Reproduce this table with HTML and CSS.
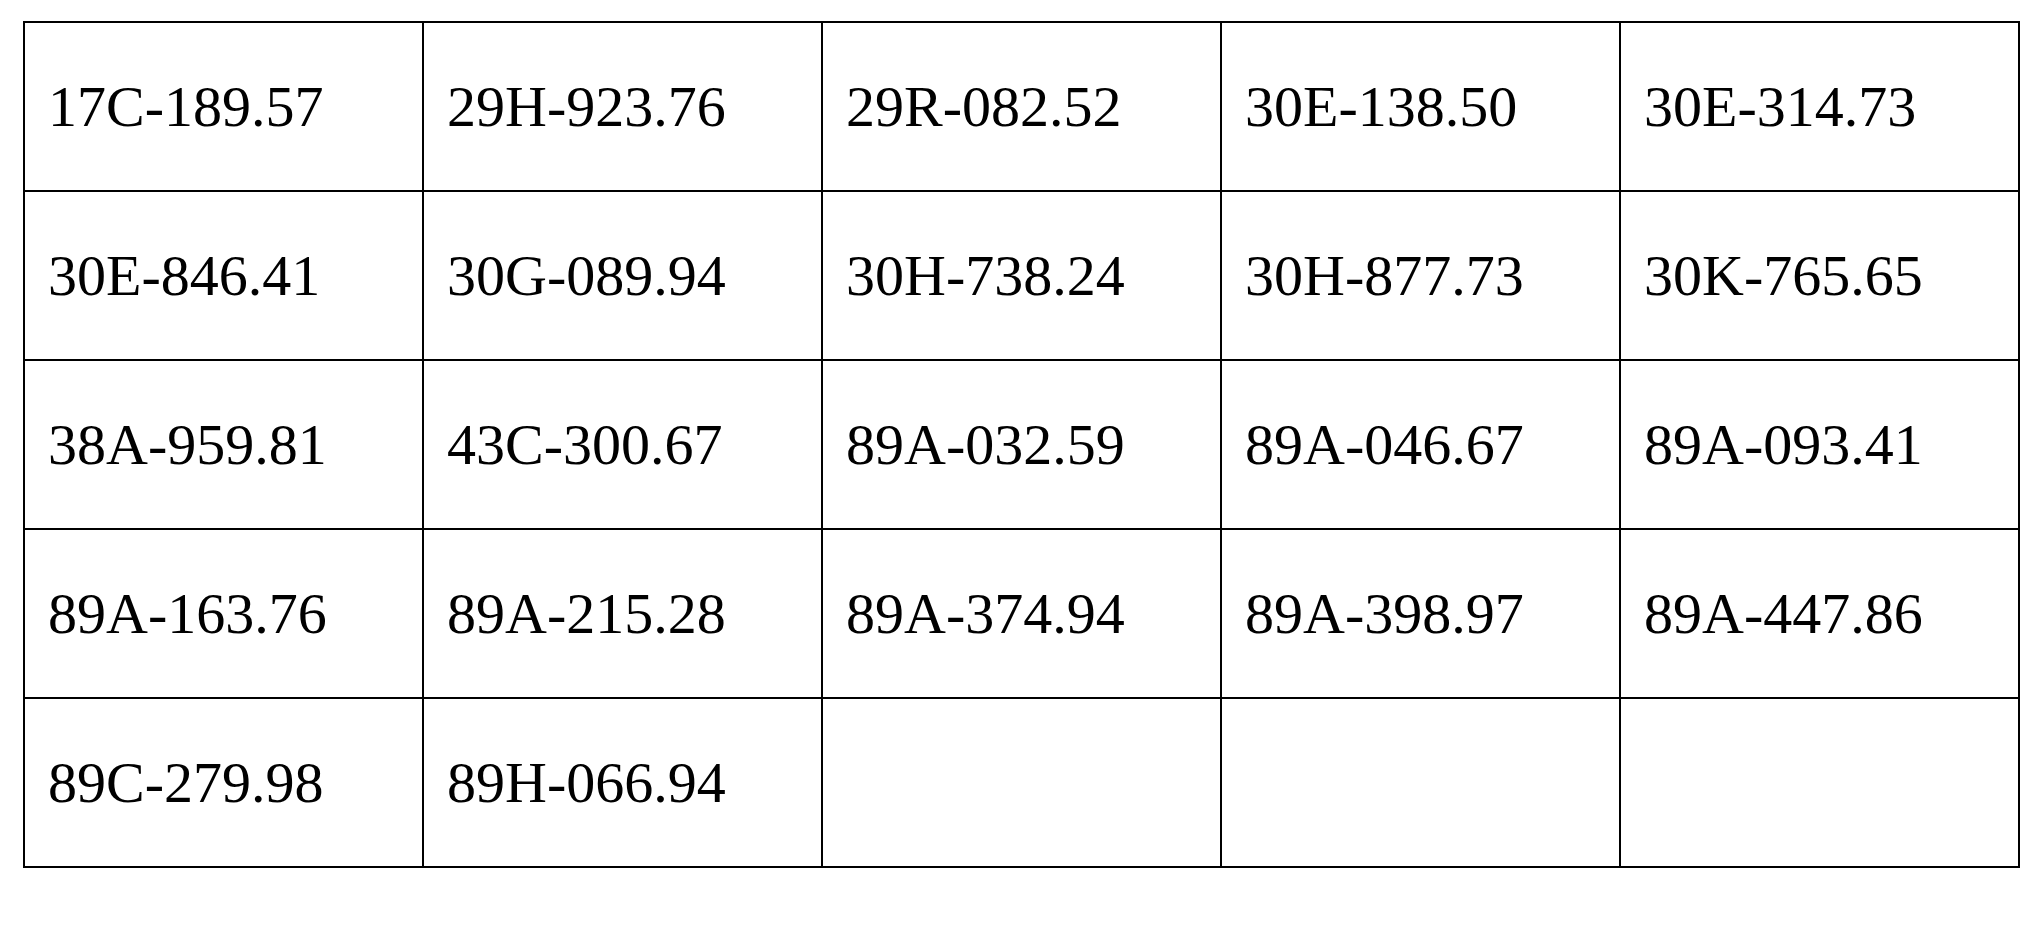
FILE: index.html
```html
<!DOCTYPE html>
<html>
<head>
<meta charset="utf-8">
<link rel="stylesheet" href="styles.css">
</head>
<body>
<table class="plates">
  <tr><td>17C-189.57</td><td>29H-923.76</td><td>29R-082.52</td><td>30E-138.50</td><td>30E-314.73</td></tr>
  <tr><td>30E-846.41</td><td>30G-089.94</td><td>30H-738.24</td><td>30H-877.73</td><td>30K-765.65</td></tr>
  <tr><td>38A-959.81</td><td>43C-300.67</td><td>89A-032.59</td><td>89A-046.67</td><td>89A-093.41</td></tr>
  <tr><td>89A-163.76</td><td>89A-215.28</td><td>89A-374.94</td><td>89A-398.97</td><td>89A-447.86</td></tr>
  <tr><td>89C-279.98</td><td>89H-066.94</td><td></td><td></td><td></td></tr>
</table>
</body>
</html>
```
FILE: styles.css
```css
html, body {
  margin: 0;
  padding: 0;
  background: #fff;
}
.plates {
  border-collapse: collapse;
  table-layout: fixed;
  width: 1997px;
  margin: 21px 0 0 23px;
  font-family: "Liberation Serif", "Times New Roman", serif;
  font-size: 58px;
  color: #000;
}
.plates td {
  border: 2px solid #000;
  height: 167px;
  padding: 0 0 0 23px;
  vertical-align: middle;
  white-space: nowrap;
  box-sizing: border-box;
}
.plates tr {
  height: 169px;
}
```
